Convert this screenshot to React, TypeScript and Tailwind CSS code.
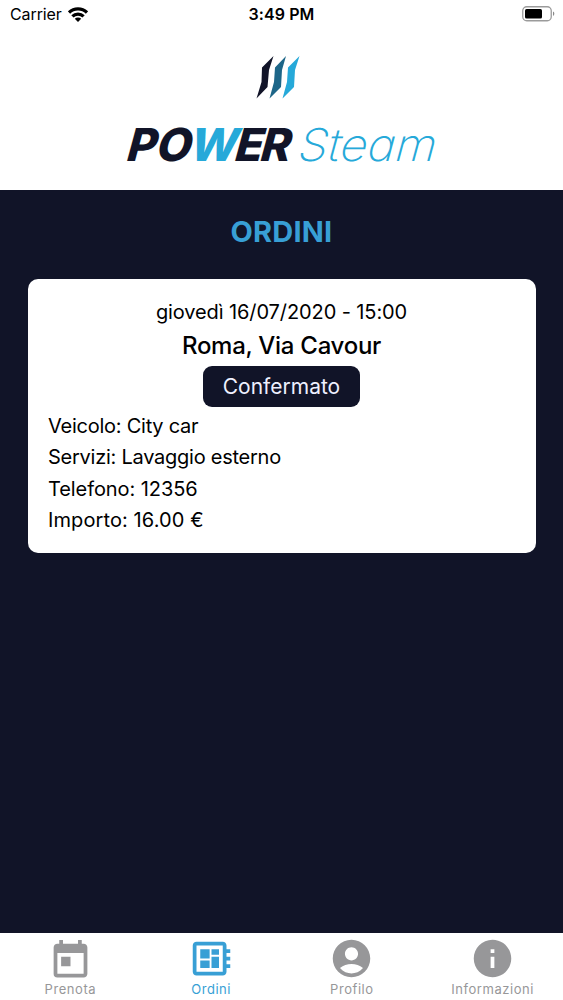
import type { IconType } from 'react-icons'
import {
  MdAccountCircle,
  MdDeveloperBoard,
  MdInfo,
  MdToday
} from 'react-icons/md'
import clsx from 'clsx'

type Tab = { label: string; icon: IconType; active?: boolean; iconClass?: string }

const tabs: Tab[] = [
  { label: 'Prenota', icon: MdToday, iconClass: 'translate-y-[2px]' },
  { label: 'Ordini', icon: MdDeveloperBoard, active: true },
  { label: 'Profilo', icon: MdAccountCircle },
  { label: 'Informazioni', icon: MdInfo }
]

const details = [
  { text: 'Veicolo: City car', className: 'tracking-[-0.25px]' },
  { text: 'Servizi: Lavaggio esterno', className: 'tracking-[-0.25px]' },
  { text: 'Telefono: 12356', className: 'tracking-[-0.08px]' },
  { text: 'Importo: 16.00 €', className: 'tracking-[0.1px]' }
]

const StatusBar = () => (
  <div className="grid grid-cols-3 items-center h-[28px] px-[10px] text-black">
    <div className="flex items-center gap-[6px]">
      <span className="text-[16px] tracking-[-0.1px]">Carrier</span>
      <svg width="20" height="15" viewBox="0 0 20 15" fill="none" stroke="black" strokeWidth="3.2">
        <path d="M1 5.6a12.6 12.6 0 0 1 18 0" />
        <path d="M4.4 9.4a7.9 7.9 0 0 1 11.2 0" />
        <path d="M10 15 6.8 11.8a4.6 4.6 0 0 1 6.4 0Z" fill="black" stroke="none" />
      </svg>
    </div>
    <span className="text-center text-[16px] font-semibold tracking-[0.1px]">3:49 PM</span>
    <svg className="justify-self-end translate-x-[2px]" width="33" height="16" viewBox="0 0 33 16">
      <rect x="0.75" y="0.75" width="28.5" height="14" rx="4" fill="none" stroke="#9b9b9b" strokeWidth="1.3" />
      <rect x="3" y="3" width="17" height="9.6" rx="1.6" fill="black" />
      <path d="M31 5.6c1.8.7 1.8 3.6 0 4.4Z" fill="#8a8a8a" />
    </svg>
  </div>
)

const wordmark = [
  { letter: 'P', transform: 'translate(124.5 161) skewX(-15)' },
  { letter: 'O', transform: 'translate(154 161) skewX(-15)' },
  { letter: 'W', transform: 'translate(187 161) skewX(-15)' },
  { letter: 'E', transform: 'translate(232.5 161) skewX(-15)' },
  { letter: 'R', transform: 'translate(258 161) skewX(-15)' }
]

const Logo = () => (
  <svg className="block mx-auto" width="330" height="130" viewBox="117 50 330 130">
    <path d="M273.5 56 262 67.5 261.500 82 256.5 98.5 267.5 87 269 70Z" fill="#111428" />
    <path d="M286 56 275 67.5 274 82 269.5 98.5 281 87 282 70Z" fill="#1d6688" />
    <path d="M299.5 56 288 67.5 287 82 282.5 98.5 294 87 295 70Z" fill="#26a9d9" />
    <g fontFamily="Inter" fontSize="45.5" fontWeight="800">
      {wordmark.map(({ letter, transform }) => (
        <text key={letter} transform={transform} fill={letter === 'W' ? '#26a9d9' : '#111428'}>
          {letter}
        </text>
      ))}
    </g>
    <text
      className="[font-feature-settings:'cv11']"
      transform="translate(295.5 161) skewX(-15)"
      fontFamily="Inter"
      fontSize="45"
      fontWeight="250"
      fill="#26a9d9"
      textLength="138"
      lengthAdjust="spacingAndGlyphs"
    >
      Steam
    </text>
  </svg>
)

const OrderCard = () => (
  <article className="mx-[27.5px] mt-[29px] h-[273.5px] rounded-[10px] bg-white px-[20.5px] pt-[18px] text-[20px] text-black">
    <div className="flex flex-col items-center">
      <p className="leading-[31px] tracking-[-0.1px]">giovedì 16/07/2020 - 15:00</p>
      <h2 className="text-[24px] font-medium leading-[35px] tracking-[-0.28px]">Roma, Via Cavour</h2>
      <span className="mt-[3px] flex h-[41px] w-[157px] items-center justify-center rounded-[9px] bg-[#111428] pt-px text-[21px] text-[#eef0ff]">
        Confermato
      </span>
    </div>
    <ul className="mt-[4px]">
      {details.map(({ text, className }) => (
        <li key={text} className={clsx('leading-[31.3px]', className)}>
          {text}
        </li>
      ))}
    </ul>
  </article>
)

const TabBar = () => (
  <nav className="grid h-[67px] grid-cols-4 bg-white pt-[3px]">
    {tabs.map(({ label, icon: Icon, active, iconClass }) => (
      <button
        key={label}
        className={clsx(
          'flex flex-col items-center',
          active ? 'text-[#389fd5]' : 'text-[#979799]'
        )}
      >
        <Icon className={clsx('size-[45px]', iconClass)} />
        <span className="text-[13px] leading-[16px] tracking-[0.55px]">{label}</span>
      </button>
    ))}
  </nav>
)

const App = () => {
  return (
    <div className="flex h-screen flex-col bg-[#111428] font-['Inter',sans-serif]">
      <header className="h-[190px] bg-white">
        <StatusBar />
        <div className="pt-[22px]">
          <Logo />
        </div>
      </header>
      <main className="flex-1 pt-[24px]">
        <h1 className="text-center text-[29px] font-bold leading-[36px] tracking-[0.2px] text-[#389fd5]">
          ORDINI
        </h1>
        <OrderCard />
      </main>
      <TabBar />
    </div>
  )
}

export default App
